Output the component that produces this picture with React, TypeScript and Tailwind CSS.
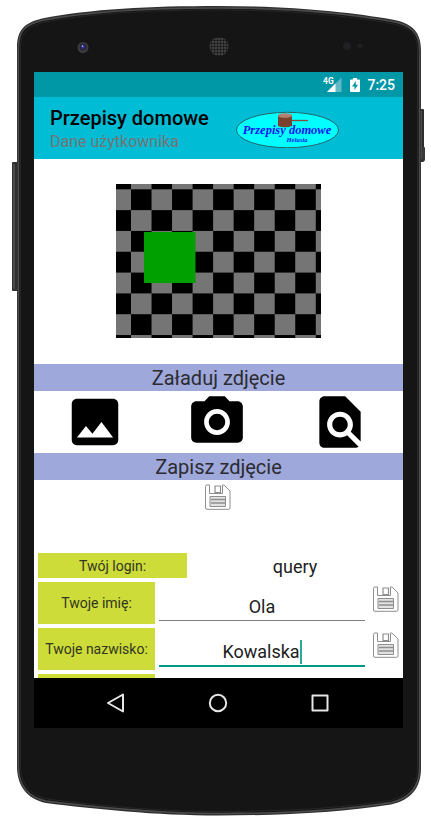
import React from "react";

function PhoneBody() {
  return (
    <svg
      aria-hidden="true"
      className="absolute inset-0 h-full w-full"
      viewBox="0 0 431 827"
      preserveAspectRatio="none"
    >
      <rect x="12" y="162" width="8" height="129" rx="1" fill="#2e2e2e" />
      <rect x="13" y="164" width="2" height="125" fill="#4a4a4a" />
      <rect x="418" y="109" width="6" height="53" rx="1" fill="#2c2c2c" />
      <rect x="422" y="147" width="3" height="14" rx="1" fill="#383838" />
      <rect x="421" y="111" width="1" height="48" fill="#4a4a4a" />
      <path
        d="M17 48C17 30 24 23 42 18.500C90 9 150 6 219 6C290 6 350 12 392 19.500C412 23 421 32 421 50V768C421 788 411 800 391 804.500C340 812.500 280 815.500 219 815.500C155 815.500 95 809 46 803C27 799 17 786 17 766Z"
        fill="#303030"
      />
      <path
        d="M18.500 48C18.500 31 25 24.500 42 20.500C90 11 150 8 219 8C290 8 350 14 392 21.500C411 25 419.500 33 419.500 50V768C419.500 787 410 798 391 802.500C340 810.500 280 813.500 219 813.500C155 813.500 95 807 46 801C28 797 18.500 785 18.500 766Z"
        fill="#141414"
        stroke="#4c4c4c"
        strokeWidth="1.500"
      />
      <path
        d="M20.500 49C20.500 33 27 26.500 43 22.500C90 13 150 10 219 10C290 10 350 16 391 23.500C409 27 417.500 34 417.500 51V767C417.500 785 408 796 390 800.500C340 808.500 280 811.500 219 811.500C155 811.500 95 805 47 799C30 795 20.500 784 20.500 765Z"
        fill="#151515"
        stroke="#262626"
        strokeWidth="1"
      />
      <circle cx="83" cy="47.500" r="5.500" fill="#3c3c3e" />
      <circle cx="83" cy="47" r="3.500" fill="#26233c" />
      <circle cx="83" cy="47" r="1.800" fill="#3634a0" />
      <circle cx="82.500" cy="46" r="0.800" fill="#c9c9ec" />
      <defs>
        <pattern id="mesh" width="3" height="3" patternUnits="userSpaceOnUse">
          <rect width="3" height="3" fill="#4e4e4e" />
          <circle cx="1.500" cy="1.500" r="1.200" fill="#161616" />
        </pattern>
      </defs>
      <circle cx="219" cy="46.500" r="9.500" fill="url(#mesh)" />
      <circle cx="347" cy="46" r="4" fill="#202022" />
      <circle cx="360" cy="46" r="2.500" fill="#202022" />
    </svg>
  );
}

function StatusBar() {
  return (
    <div className="flex h-[25px] items-center justify-end bg-[#0097a7] pr-2 text-white">
      <svg aria-hidden="true" className="mr-2 h-[18px] w-5" viewBox="0 0 20 18">
        <path d="M19.500 1.500V16H5Z" fill="#62b9c5" />
        <path d="M13.500 7.500V16H5Z" fill="#fff" />
        <text x="1" y="8" fontSize="8.500" fontWeight="700" fill="#fff" fontFamily="Roboto, sans-serif">
          4G
        </text>
      </svg>
      <svg aria-hidden="true" className="mr-[7px] h-4 w-[10px]" viewBox="0 0 10 16">
        <path d="M3 1H7V2.500H9Q10 2.500 10 3.500V14Q10 15 9 15H1Q0 15 0 14V3.500Q0 2.500 1 2.500H3Z" fill="#fff" />
        <path d="M5.800 4L2 9.500H4.500V13L8 7.800H5.800Z" fill="#0097a7" />
      </svg>
      <time className="pt-px text-sm leading-5 font-medium">7:25</time>
    </div>
  );
}

function Logo() {
  return (
    <svg role="img" aria-label="Przepisy domowe Helusia" className="h-10 w-[104px]" viewBox="0 0 104 40">
      <ellipse cx="51.500" cy="22" rx="51" ry="17.700" fill="#00ffff" stroke="#27666a" strokeWidth="1" />
      <path d="M55 12.500H72" stroke="#8b4936" strokeWidth="1.300" />
      <path d="M42 7.500V18Q49 20.500 56 18V7.500Z" fill="#7a412e" />
      <ellipse cx="49" cy="7.500" rx="7" ry="2.300" fill="#b08070" />
      <g fill="#1414f0" fontFamily="'Liberation Serif', serif" fontStyle="italic" fontWeight="700">
        <text x="51" y="26" fontSize="12.500" textAnchor="middle">
          Przepisy domowe
        </text>
        <text x="61" y="34" fontSize="6.500" textAnchor="middle">
          Helusia
        </text>
      </g>
    </svg>
  );
}

function Preview() {
  return (
    <svg role="img" aria-label="Zdjęcie" className="mx-auto block h-[154px] w-[205px]" viewBox="0 0 205 154">
      <defs>
        <pattern id="checks" x="15" y="5.300" width="41.060" height="41.640" patternUnits="userSpaceOnUse">
          <rect width="41.060" height="41.640" fill="#757575" />
          <rect width="20.530" height="20.820" fill="#000" />
          <rect x="20.530" y="20.820" width="20.530" height="20.820" fill="#000" />
        </pattern>
      </defs>
      <rect width="205" height="154" fill="url(#checks)" />
      <rect x="28" y="48" width="51.500" height="51" fill="#00a000" />
    </svg>
  );
}

function Band({ children }: { children: React.ReactNode }) {
  return (
    <h2 className="h-[27px] bg-[#9fa8da] text-center text-xl leading-[29px] text-[#2b2b30]">{children}</h2>
  );
}

function MaterialIcon({ d }: { d: string }) {
  return (
    <svg aria-hidden="true" className="h-[62px] w-[62px]" viewBox="0 0 24 24" fill="#000">
      <path d={d} />
    </svg>
  );
}

function SaveButton({ label }: { label: string }) {
  return (
    <button type="button" aria-label={label} className="block h-[26px] w-[26px]">
      <svg aria-hidden="true" className="h-full w-full" viewBox="0 0 26 26" fill="none" stroke="#8e8e8e">
        <path d="M.5 2.500Q.5 1 2 1H4.500V9.500H17.500V1H19L25 7V24Q25 25.300 23.500 25.300H2Q.5 25.300 .5 24Z" fill="#fff" />
        <path d="M10 2H15.500V8.500H10Z" strokeWidth="1.200" />
        <path d="M5 12.500H20.500V22.500H5Z" fill="#e2e2e2" />
        <path d="M6 15.500H20M6 19H20" strokeWidth="1.500" />
      </svg>
    </button>
  );
}

const labelClass = "flex items-center justify-center bg-[#cddc39] text-sm text-[#33351f]";

function Field({ id, label, value, focused }: { id: string; label: string; value: string; focused?: boolean }) {
  return (
    <div className="flex h-[42px] gap-1">
      <label htmlFor={id} className={`${labelClass} w-[117px] shrink-0`}>
        {label}
      </label>
      <div className="flex min-w-0 flex-1 flex-col justify-end pb-[3px]">
        <div
          className={
            focused
              ? "flex h-7 items-center justify-center border-b-2 border-[#009688]"
              : "flex h-7 items-center justify-center border-b border-[#808080]"
          }
        >
          <input
            id={id}
            defaultValue={value}
            className="field-sizing-content text-center text-lg leading-6 text-[#212121] outline-none"
          />
          {focused && <span aria-hidden="true" className="h-6 w-0.5 bg-[#2fa79b]" />}
        </div>
      </div>
      <div className="flex w-[34px] shrink-0 justify-center pt-1">
        <SaveButton label={`Zapisz: ${label}`} />
      </div>
    </div>
  );
}

export default function App() {
  return (
    <main className="relative bg-white pt-[72px] pr-7 pb-[99px] pl-[34px] font-[Roboto,sans-serif]">
      <PhoneBody />
      <div className="relative bg-white">
        <StatusBar />
        <header className="flex h-[62px] items-center bg-[#00bcd4] pl-4">
          <div className="w-[186px] shrink-0 pt-1">
            <h1 className="text-xl leading-6 font-medium text-black">Przepisy domowe</h1>
            <p className="text-base leading-6 text-[#757575]">Dane użytkownika</p>
          </div>
          <Logo />
        </header>

        <div className="pt-[25px] pb-[26px]">
          <Preview />
        </div>

        <Band>Załaduj zdjęcie</Band>
        <div className="grid h-[62px] grid-cols-3 justify-items-center pr-0.5">
          <button type="button" aria-label="Galeria">
            <MaterialIcon d="M21 19V5c0-1.100-.9-2-2-2H5c-1.100 0-2 .9-2 2v14c0 1.100.9 2 2 2h14c1.100 0 2-.9 2-2zM8.500 13.500l2.500 3.010L14.500 12l4.500 6H5l3.500-4.500z" />
          </button>
          <button type="button" aria-label="Aparat">
            <MaterialIcon d="M12 8.800a3.200 3.200 0 1 0 0 6.400a3.200 3.200 0 1 0 0-6.400zM9 2L7.170 4H4c-1.100 0-2 .9-2 2v12c0 1.100.9 2 2 2h16c1.100 0 2-.9 2-2V6c0-1.100-.9-2-2-2h-3.170L15 2H9zm3 15c-2.760 0-5-2.240-5-5s2.240-5 5-5 5 2.240 5 5-2.240 5-5 5z" />
          </button>
          <button type="button" aria-label="Podgląd">
            <MaterialIcon d="M20 19.590V8l-6-6H6c-1.100 0-1.990.9-1.990 2L4 20c0 1.100.89 2 1.990 2H18c.45 0 .85-.15 1.190-.4l-4.430-4.430c-.8.520-1.740.83-2.760.83-2.760 0-5-2.240-5-5s2.240-5 5-5 5 2.240 5 5c0 1.020-.31 1.960-.83 2.750L20 19.590zM9 13c0 1.660 1.340 3 3 3s3-1.340 3-3-1.340-3-3-3-3 1.340-3 3z" />
          </button>
        </div>

        <Band>Zapisz zdjęcie</Band>
        <div className="flex h-[73px] justify-center pt-1 pr-0.5">
          <SaveButton label="Zapisz zdjęcie" />
        </div>

        <form className="flex flex-col gap-1 pl-1">
          <div className="flex h-[25px]">
            <div className={`${labelClass} w-[149px] shrink-0`}>Twój login:</div>
            <output className="flex-1 text-center text-lg leading-[27px] text-[#212121]">query</output>
          </div>
          <Field id="imie" label="Twoje imię:" value="Ola" />
          <Field id="nazwisko" label="Twoje nazwisko:" value="Kowalska" focused />
          <div className="h-1 w-[117px] bg-[#cddc39]" />
        </form>

        <nav className="flex h-[50px] items-center justify-center gap-[78px] bg-black pr-0.5">
          <button type="button" aria-label="Wstecz">
            <svg className="h-6 w-6" viewBox="0 0 24 24" fill="none" stroke="#e6e6e6" strokeWidth="2" strokeLinejoin="round">
              <path d="M19 3.500V20.500L4 12Z" />
            </svg>
          </button>
          <button type="button" aria-label="Ekran główny">
            <svg className="h-6 w-6" viewBox="0 0 24 24" fill="none" stroke="#e6e6e6" strokeWidth="2">
              <circle cx="12" cy="12" r="8.200" />
            </svg>
          </button>
          <button type="button" aria-label="Ostatnie">
            <svg className="h-6 w-6" viewBox="0 0 24 24" fill="none" stroke="#e6e6e6" strokeWidth="2" strokeLinejoin="round">
              <path d="M4.500 4.500H19.500V19.500H4.500Z" />
            </svg>
          </button>
        </nav>
      </div>
    </main>
  );
}
